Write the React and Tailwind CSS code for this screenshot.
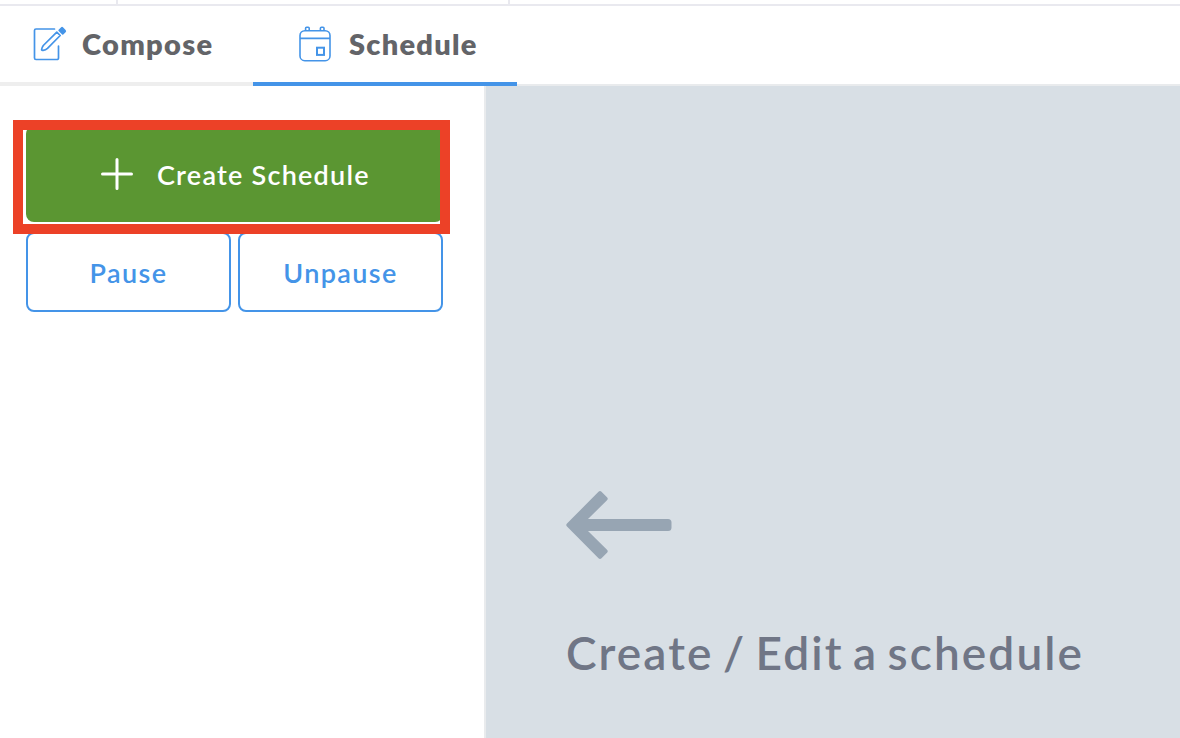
function ComposeIcon() {
  return (
    <svg width="36" height="38" viewBox="0 0 36 38" fill="none" stroke="#4494e8" strokeWidth="1.7" strokeLinecap="round" strokeLinejoin="round" className="shrink-0">
      <path d="M22.500 5H4a1.500 1.500 0 0 0-1.500 1.500v27.500A1.500 1.500 0 0 0 4 35.500h21a1.500 1.500 0 0 0 1.500-1.500V22" />
      <path d="M24.800 8.200 11.300 21.500c-1 1.400-1.700 3-1.700 4.300.300.600.800.800 1.500.600 1.500-.200 3.200-.900 4.400-2L28.200 11.500z" />
      <path d="m27.200 6.300 2.300-2.300a.8.8 0 0 1 1.100 0L33 6.500a.8.8 0 0 1 0 1.100l-2.300 2.200z" fill="#4494e8" />
    </svg>
  );
}

function CalendarIcon() {
  return (
    <svg width="34" height="38" viewBox="0 0 34 38" fill="none" stroke="#4494e8" strokeWidth="1.6" className="shrink-0">
      <rect x="2" y="6.700" width="30" height="30" rx="4.800" />
      <path d="M2 14.400h30M7.600 6.500V4.200a1 1 0 0 1 1-1h1.600a1 1 0 0 1 1 1v2.300M22.400 6.500V4.200a1 1 0 0 1 1-1h1.600a1 1 0 0 1 1 1v2.300" />
      <rect x="19" y="23.700" width="7" height="7.200" strokeWidth="2" />
    </svg>
  );
}

function Tab({ children, className }) {
  return <div className={`flex h-20 shrink-0 border-b-4 font-extrabold text-[29px] leading-[76px] text-[#636468] ${className}`}>{children}</div>;
}

export default function App() {
  return (
    <div className="flex h-[738px] w-[1180px] flex-col overflow-hidden whitespace-nowrap bg-white font-['Lato',sans-serif]">
      <div className="flex h-1.5 shrink-0 border-b-2 border-[#e9e9ef]">
        <div className="w-[118px] border-r-2 border-[#e9e9ef]" />
        <div className="w-[392px] border-r-2 border-[#e9e9ef]" />
      </div>
      <nav className="flex h-20 shrink-0">
        <Tab className="w-[253px] border-[#eeeeee] pl-8">
          <div className="pt-[18px]"><ComposeIcon /></div>
          <span className="pl-[14px] tracking-[1.3px]">Compose</span>
        </Tab>
        <Tab className="w-[264px] border-[#4494e8] pl-[45px]">
          <div className="pt-[18px]"><CalendarIcon /></div>
          <span className="pl-[17px] tracking-[1.25px]">Schedule</span>
        </Tab>
        <div className="flex-1 border-b-2 border-[#e9ebed]" />
      </nav>
      <div className="flex min-h-0 flex-1">
        <aside className="relative w-[486px] shrink-0 border-r-2 border-[#e9ebed] pl-[26px] pt-10">
          <button className="flex h-24 w-[417px] items-center rounded-lg bg-[#5b9632] pl-[75px] text-[27px] font-semibold text-white">
            <svg width="32" height="32" viewBox="0 0 32 32" stroke="white" strokeWidth="3" strokeLinecap="round"><path d="M1.500 16h29M16 1.500v29" /></svg>
            <span className="pl-6 pt-0.5 tracking-[1.23px]">Create Schedule</span>
          </button>
          <div className="flex gap-[7px] pt-[10px] text-[27px] font-semibold text-[#4494e8]">
            <button className="h-20 w-[205px] rounded-lg border-2 border-[#4494e8] pt-0.5 tracking-[1.4px]">Pause</button>
            <button className="h-20 w-[205px] rounded-lg border-2 border-[#4494e8] pt-0.5 tracking-[1.4px]">Unpause</button>
          </div>
          <div className="pointer-events-none absolute left-[13px] top-[34px] h-[114px] w-[437px] border-[10px] border-[#ec4127]" />
        </aside>
        <main className="flex-1 bg-[#d8dfe5] pl-20 pt-[404px]">
          <svg width="106" height="70" viewBox="0 0 106 70" fill="#97a5b3">
            <path d="M1 33.500 32.500 1.800q1.500-1.500 3 0l5.500 5.500q1.500 1.500 0 3L22 29h80q3.500 0 3.500 3.500v5q0 3.500-3.500 3.500H22l19 18.700q1.500 1.500 0 3l-5.500 5.500q-1.500 1.500-3 0L1 36.500q-1.500-1.500 0-3Z" />
          </svg>
          <h1 className="pt-[65px] text-[46px] font-semibold leading-[56px] tracking-[2.1px] [word-spacing:-4.2px] text-[#707686]">Create / Edit a schedule</h1>
        </main>
      </div>
    </div>
  );
}
